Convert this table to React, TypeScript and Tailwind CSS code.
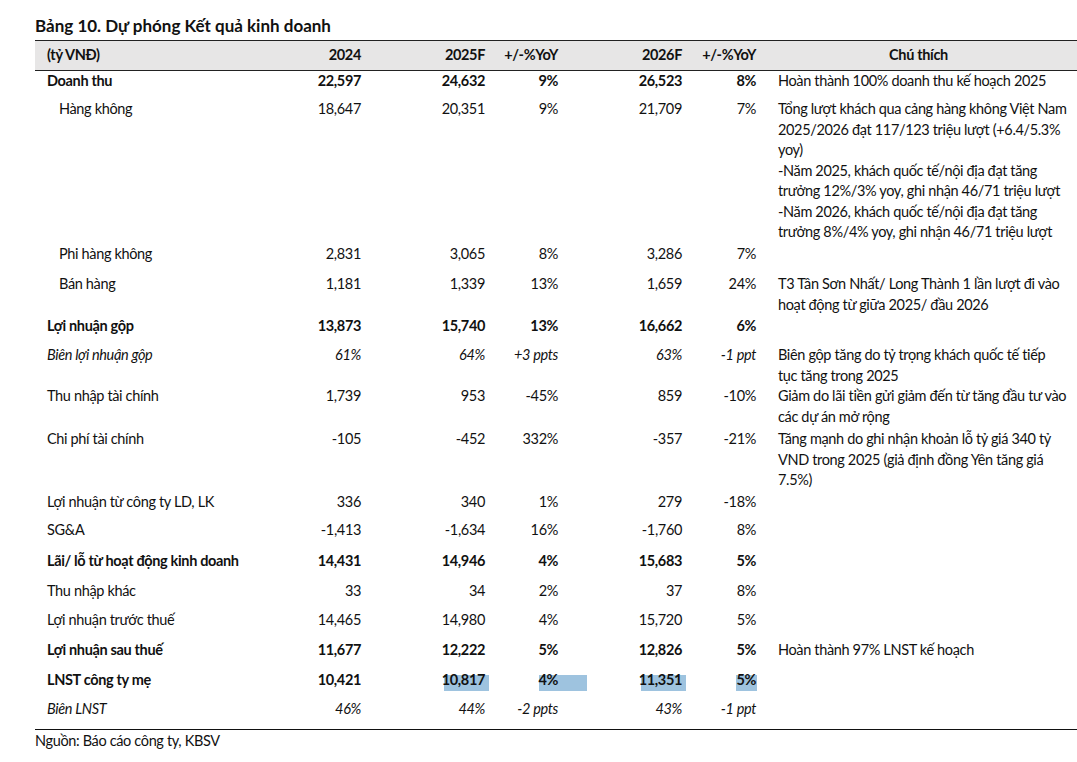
import React from "react";

type Row = {
  label: string;
  indent?: boolean;
  kind: "bold" | "italic" | "normal";
  vals: string[];
  note?: string[];
  h: string;
  hl?: boolean;
};

const rows: Row[] = [
  { label: "Doanh thu", kind: "bold", vals: ["22,597", "24,632", "9%", "26,523", "8%"], note: ["Hoàn thành 100% doanh thu kế hoạch 2025"], h: "h-[28px]" },
  {
    label: "Hàng không",
    indent: true,
    kind: "normal",
    vals: ["18,647", "20,351", "9%", "21,709", "7%"],
    note: [
      "Tổng lượt khách qua cảng hàng không Việt Nam",
      "2025/2026 đạt 117/123 triệu lượt (+6.4/5.3%",
      "yoy)",
      "-Năm 2025, khách quốc tế/nội địa đạt tăng",
      "trưởng 12%/3% yoy, ghi nhận 46/71 triệu lượt",
      "-Năm 2026, khách quốc tế/nội địa đạt tăng",
      "trưởng 8%/4% yoy, ghi nhận 46/71 triệu lượt",
    ],
    h: "h-[145px]",
  },
  { label: "Phi hàng không", indent: true, kind: "normal", vals: ["2,831", "3,065", "8%", "3,286", "7%"], h: "h-[30px]" },
  {
    label: "Bán hàng",
    indent: true,
    kind: "normal",
    vals: ["1,181", "1,339", "13%", "1,659", "24%"],
    note: ["T3 Tân Sơn Nhất/ Long Thành 1 lần lượt đi vào", "hoạt động từ giữa 2025/ đầu 2026"],
    h: "h-[42px]",
  },
  { label: "Lợi nhuận gộp", kind: "bold", vals: ["13,873", "15,740", "13%", "16,662", "6%"], h: "h-[29px]" },
  {
    label: "Biên lợi nhuận gộp",
    kind: "italic",
    vals: ["61%", "64%", "+3 ppts", "63%", "-1 ppt"],
    note: ["Biên gộp tăng do tỷ trọng khách quốc tế tiếp", "tục tăng trong 2025"],
    h: "h-[41px]",
  },
  {
    label: "Thu nhập tài chính",
    kind: "normal",
    vals: ["1,739", "953", "-45%", "859", "-10%"],
    note: ["Giảm do lãi tiền gửi giảm đến từ tăng đầu tư vào", "các dự án mở rộng"],
    h: "h-[43px]",
  },
  {
    label: "Chi phí tài chính",
    kind: "normal",
    vals: ["-105", "-452", "332%", "-357", "-21%"],
    note: ["Tăng mạnh do ghi nhận khoản lỗ tỷ giá 340 tỷ", "VND trong 2025 (giả định đồng Yên tăng giá", "7.5%)"],
    h: "h-[63px]",
  },
  { label: "Lợi nhuận từ công ty LD, LK", kind: "normal", vals: ["336", "340", "1%", "279", "-18%"], h: "h-[28px]" },
  { label: "SG&A", kind: "normal", vals: ["-1,413", "-1,634", "16%", "-1,760", "8%"], h: "h-[31px]" },
  { label: "Lãi/ lỗ từ hoạt động kinh doanh", kind: "bold", vals: ["14,431", "14,946", "4%", "15,683", "5%"], h: "h-[30px]" },
  { label: "Thu nhập khác", kind: "normal", vals: ["33", "34", "2%", "37", "8%"], h: "h-[29px]" },
  { label: "Lợi nhuận trước thuế", kind: "normal", vals: ["14,465", "14,980", "4%", "15,720", "5%"], h: "h-[30px]" },
  { label: "Lợi nhuận sau thuế", kind: "bold", vals: ["11,677", "12,222", "5%", "12,826", "5%"], note: ["Hoàn thành 97% LNST kế hoạch"], h: "h-[30px]" },
  { label: "LNST công ty mẹ", kind: "bold", vals: ["10,421", "10,817", "4%", "11,351", "5%"], h: "h-[29px]", hl: true },
  { label: "Biên LNST", kind: "italic", vals: ["46%", "44%", "-2 ppts", "43%", "-1 ppt"], h: "h-[31px] border-b border-[#111]" },
];

const grid = "grid grid-cols-[265px_65px_124px_73px_124px_74px_1fr]";

const hlClass: Record<number, string> = {
  1: "left-[79px] w-[45px]",
  2: "left-[50px] w-[48px]",
  3: "left-[79px] w-[45px]",
  4: "left-[50px] w-[21px]",
};

function DataRow({ r }: { r: Row }) {
  const style = r.kind === "bold" ? "font-bold" : r.kind === "italic" ? "italic" : "";
  return (
    <div className={`${grid} ${r.h} box-border leading-[20.5px]`}>
      <div className={`${r.indent ? "pl-[24px]" : "pl-[12px]"} ${style} whitespace-nowrap`}>{r.label}</div>
      {r.vals.map((v, i) => (
        <div key={i} className={`relative text-right pr-[4px] whitespace-nowrap ${style}`}>
          {r.hl && i > 0 ? (
            <div className={`absolute top-[5px] h-[16px] bg-[#9ec3df] ${hlClass[i]}`} />
          ) : null}
          <span className="relative">{v}</span>
        </div>
      ))}
      <div className="pl-[18px] whitespace-nowrap">
        {r.note?.map((n, i) => (
          <div key={i}>{n}</div>
        ))}
      </div>
    </div>
  );
}

export default function App() {
  return (
    <div className="w-[1077px] h-[762px] bg-white text-[#111] font-[family-name:Lato,sans-serif] text-[14.5px] tracking-[-0.35px] overflow-hidden">
      <div className="pl-[35px] pt-[13px]">
        <div className="text-[17px] tracking-normal font-bold leading-[26px] h-[27px]">Bảng 10. Dự phóng Kết quả kinh doanh</div>
        <div className={`${grid} h-[31px] box-border border-y border-[#222] bg-[#e7e6e6] font-bold leading-[28px]`}>
          <div className="pl-[12px]">(tỷ VNĐ)</div>
          <div className="text-right pr-[4px]">2024</div>
          <div className="text-right pr-[4px]">2025F</div>
          <div className="text-right pr-[4px]">+/-%YoY</div>
          <div className="text-right pr-[4px]">2026F</div>
          <div className="text-right pr-[4px]">+/-%YoY</div>
          <div className="text-center">Chú thích</div>
        </div>
        {rows.map((r, i) => (
          <DataRow key={i} r={r} />
        ))}
        <div className="leading-[20px] pt-px">Nguồn: Báo cáo công ty, KBSV</div>
      </div>
    </div>
  );
}
